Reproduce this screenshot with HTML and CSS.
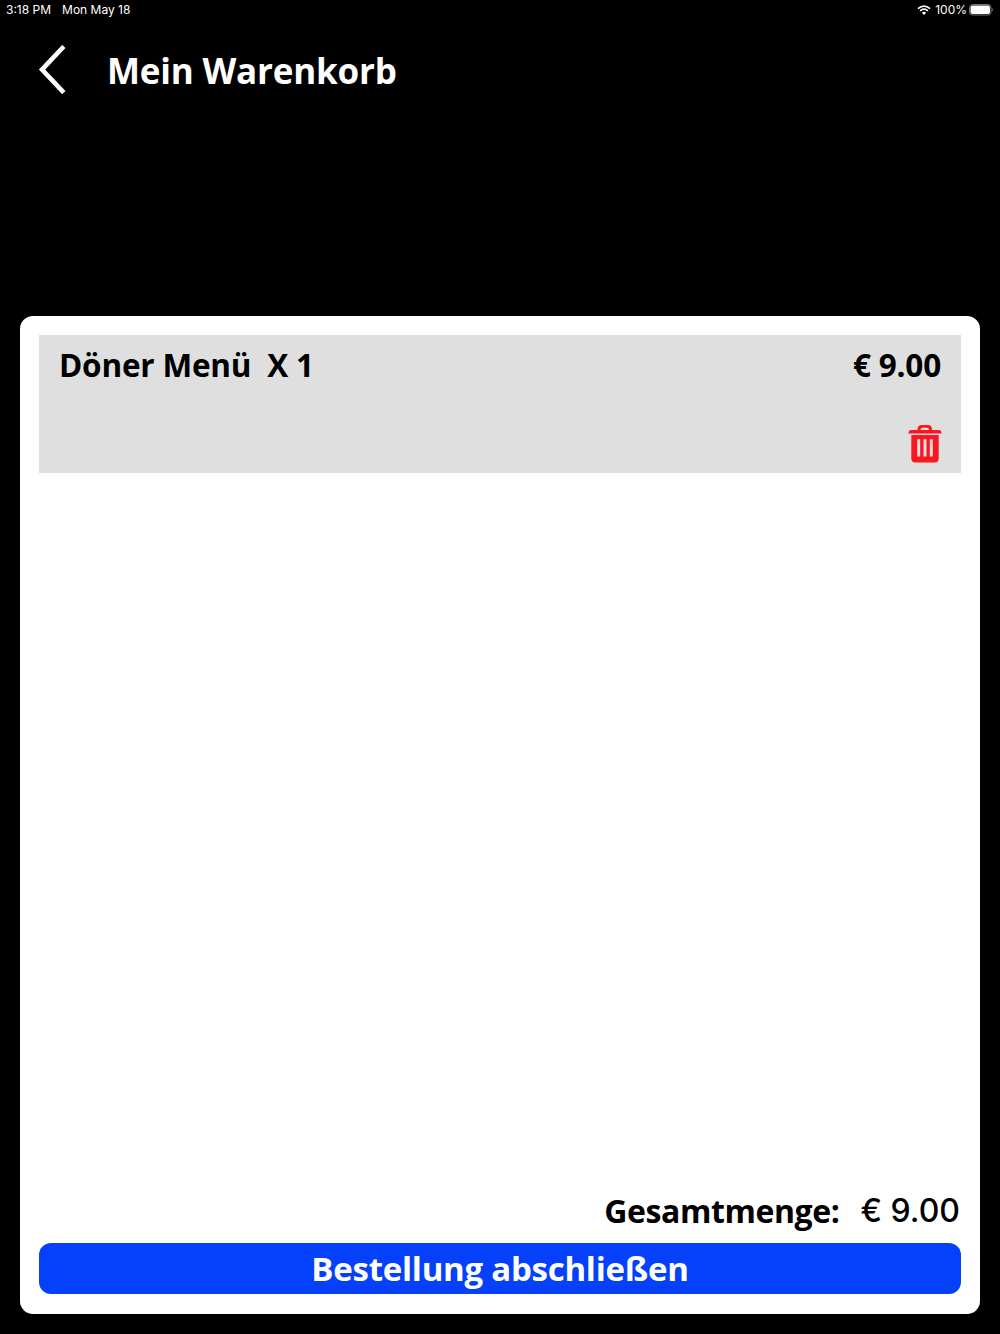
FILE: index.html
```html
<!DOCTYPE html>
<html lang="de">
<head>
<meta charset="utf-8">
<title>Mein Warenkorb</title>
<link rel="stylesheet" href="styles.css">
</head>
<body>
<div class="status">
  <div class="status-left"><span class="time">3:18 PM</span><span class="date">Mon May 18</span></div>
  <div class="status-right">
    <svg class="wifi" viewBox="0 0 14 10"><path d="M1 3.7Q7-1.6 13 3.7M3.1 5.9Q7 2.5 10.9 5.9" fill="none" stroke="#fff" stroke-width="1.7"/><path d="M4.9 7.7Q7 6 9.1 7.7L7 9.9Z" fill="#fff"/></svg>
    <span class="percent">100%</span>
    <svg class="battery" viewBox="0 0 24 12"><rect x=".5" y=".5" width="21.500" height="10.500" rx="3" fill="none" stroke="#777"/><rect x="1.500" y="1.500" width="19.500" height="8.500" rx="2" fill="#fff"/><path d="M22.800 4v3.600q1.200-.5 1.200-1.800T22.800 4" fill="#777"/></svg>
  </div>
</div>
<header class="header">
  <svg class="back" viewBox="0 0 28 50"><path d="M25.800 1.500 4 24.600 25.800 47.700" fill="none" stroke="#fff" stroke-width="4.600"/></svg>
  <h1 class="title">Mein Warenkorb</h1>
</header>
<main class="cart">
  <section class="item">
    <div class="item-line"><span class="item-name">Döner Menü&nbsp; X 1</span><span class="item-price">€ 9.00</span></div>
    <svg class="trash" viewBox="0 0 34 38"><path fill="#fc1620" fill-rule="evenodd" d="M9.500 5Q9.500 0 13.500 0h6.500q4 0 4 5h7q2.500 0 2.500 3.500H.5Q.5 5 3 5ZM12.500 5h8.500Q21 2.800 19 2.800h-4.500Q12.500 2.800 12.500 5ZM3.300 10h27.400v23.500q0 4-4 4H7.300q-4 0-4-4ZM9.200 14.200v17.400h3V14.200ZM15.500 14.200v17.400h3V14.200ZM21.800 14.200v17.400h3V14.200Z"/></svg>
  </section>
  <div class="total"><span class="total-label">Gesamtmenge:</span><span class="total-price">€ 9.00</span></div>
  <button class="checkout">Bestellung abschließen</button>
</main>
</body>
</html>
```
FILE: styles.css
```css
* { box-sizing: border-box; }
body { margin: 0; height: 1334px; background: #000; color: #fff; font-family: "Open Sans", sans-serif; display: flex; flex-direction: column; overflow: hidden; }
.status { height: 20px; padding: 0 7px 0 6px; display: flex; justify-content: space-between; font: 400 12px/20px Inter, sans-serif; }
.status-left, .status-right { display: flex; align-items: center; }
.status-left { gap: 11px; }
.wifi { width: 14px; height: 10px; margin-right: 4px; }
.percent { margin-right: 2px; }
.battery { width: 24px; height: 12px; }
.header { height: 296px; padding: 25px 0 0 38px; display: flex; align-items: flex-start; }
.back { width: 28px; height: 50px; }
.title { margin: 1px 0 0 41px; font-size: 35px; line-height: 50px; font-weight: 700; letter-spacing: -.2px; white-space: nowrap; }
.cart { height: 998px; margin: 0 20px; padding: 19px 19px 20px; border-radius: 13px; background: #fff; color: #000; display: flex; flex-direction: column; }
.item { height: 138px; padding: 8px 20px 10px; background: #dfdfdf; display: flex; flex-direction: column; justify-content: space-between; }
.item-line { display: flex; justify-content: space-between; font-size: 31.5px; line-height: 44px; font-weight: 700; letter-spacing: -.2px; }
.trash { width: 34px; height: 38px; margin-right: -1px; align-self: flex-end; }
.total { margin-top: auto; height: 62px; display: flex; justify-content: flex-end; gap: 21px; font-size: 32px; line-height: 60px; font-weight: 700; }
.total-label { letter-spacing: -.4px; }
.total-price { margin-right: 1px; font-family: Inter, sans-serif; font-weight: 500; }
.checkout { height: 51px; flex: none; border: 0; border-radius: 12px; background: #0540fa; color: #fff; font: 700 33px/50px "Open Sans", sans-serif; letter-spacing: -.25px; padding: 0; }
```
